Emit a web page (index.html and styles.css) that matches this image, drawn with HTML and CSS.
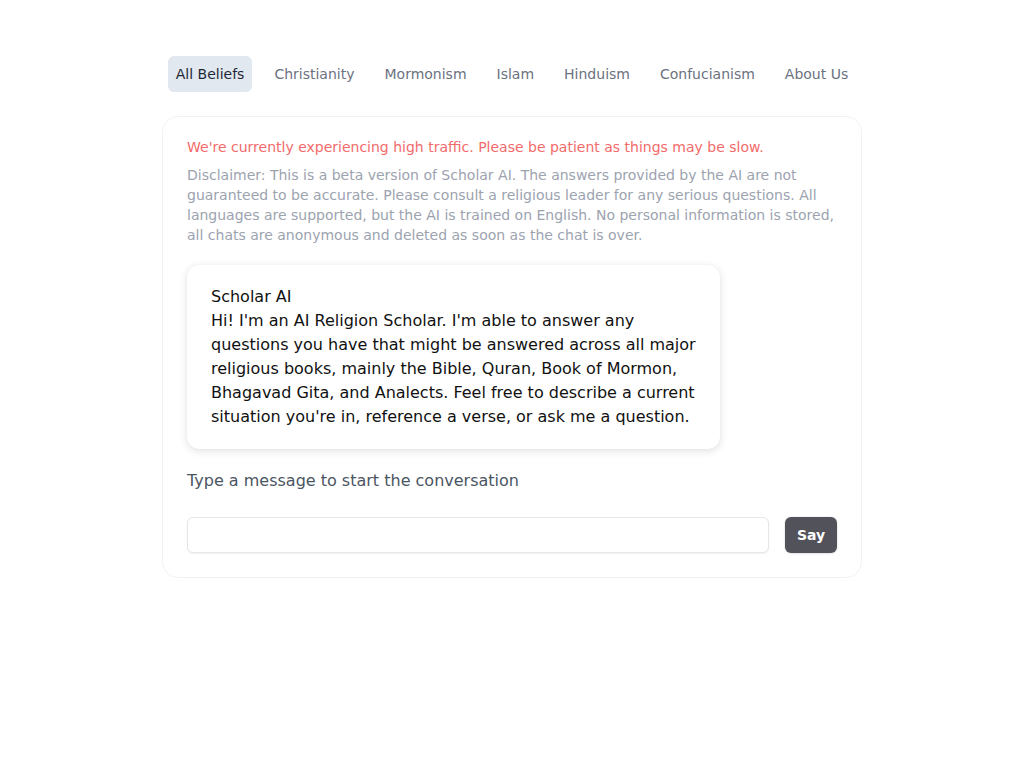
FILE: index.html
```html
<!DOCTYPE html>
<html lang="en">
<head>
<meta charset="utf-8">
<title>Scholar AI</title>
<link rel="stylesheet" href="styles.css">
</head>
<body>
<div class="page">
  <nav class="tabs">
    <a class="tab active">All Beliefs</a>
    <a class="tab">Christianity</a>
    <a class="tab">Mormonism</a>
    <a class="tab">Islam</a>
    <a class="tab">Hinduism</a>
    <a class="tab">Confucianism</a>
    <a class="tab">About Us</a>
  </nav>
  <main class="card">
    <p class="warning">We're currently experiencing high traffic. Please be patient as things may be slow.</p>
    <p class="disclaimer">Disclaimer: This is a beta version of Scholar AI. The answers provided by the AI are not guaranteed to be accurate. Please consult a religious leader for any serious questions. All languages are supported, but the AI is trained on English. No personal information is stored, all chats are anonymous and deleted as soon as the chat is over.</p>
    <div class="bubble">
      <div class="sender">Scholar AI</div>
      <div class="message">Hi! I'm an AI Religion Scholar. I'm able to answer any questions you have that might be answered across all major religious books, mainly the Bible, Quran, Book of Mormon, Bhagavad Gita, and Analects. Feel free to describe a current situation you're in, reference a verse, or ask me a question.</div>
    </div>
    <p class="hint">Type a message to start the conversation</p>
    <form class="composer">
      <input class="input" type="text">
      <button class="say" type="button">Say</button>
    </form>
  </main>
</div>
</body>
</html>
```
FILE: styles.css
```css
* { box-sizing: border-box; }
html, body { margin: 0; padding: 0; background: #ffffff; }
body {
  font-family: "DejaVu Sans", sans-serif;
  color: #111827;
}
.page {
  display: flex;
  flex-direction: column;
  align-items: center;
  padding-top: 56px;
}
.tabs {
  display: flex;
  justify-content: center;
  gap: 14px;
}
.tab {
  display: block;
  padding: 8px;
  font-size: 14px;
  line-height: 20px;
  color: #6b7280;
  border-radius: 6px;
  cursor: pointer;
}
.tab.active {
  background: #e2e8f0;
  color: #1f2937;
}
.card {
  margin-top: 24px;
  width: 700px;
  border: 1px solid #f1f2f4;
  border-radius: 16px;
  padding: 20px 24px 24px;
}
.warning {
  margin: 0;
  font-size: 14px;
  line-height: 20px;
  color: #f26b6b;
}
.disclaimer {
  margin: 8px 0 0;
  font-size: 14px;
  line-height: 20px;
  color: #9ca3af;
}
.bubble {
  margin-top: 20px;
  width: 533px;
  padding: 20px 24px;
  border-radius: 12px;
  background: #fff;
  box-shadow: 0 2px 8px rgba(0,0,0,0.12), 0 0 1px rgba(0,0,0,0.08);
  font-size: 16px;
  line-height: 24px;
  color: #111111;
}
.hint {
  margin: 20px 0 0;
  font-size: 16px;
  line-height: 24px;
  color: #4b5563;
}
.composer {
  display: flex;
  gap: 16px;
  margin-top: 24px;
}
.input {
  flex: 1;
  height: 36px;
  border: 1px solid #e5e7eb;
  border-radius: 6px;
  box-shadow: 0 1px 2px rgba(0,0,0,0.06);
  font: inherit;
  font-size: 14px;
  padding: 0 12px;
  outline: none;
}
.say {
  height: 36px;
  width: 52px;
  border: none;
  border-radius: 6px;
  background: #52525b;
  color: #fff;
  font-family: "DejaVu Sans", sans-serif;
  font-weight: bold;
  font-size: 14px;
  padding: 0;
  box-shadow: 0 0 0 1px rgba(0,0,0,0.03), 0 1px 3px rgba(0,0,0,0.08);
}
```
